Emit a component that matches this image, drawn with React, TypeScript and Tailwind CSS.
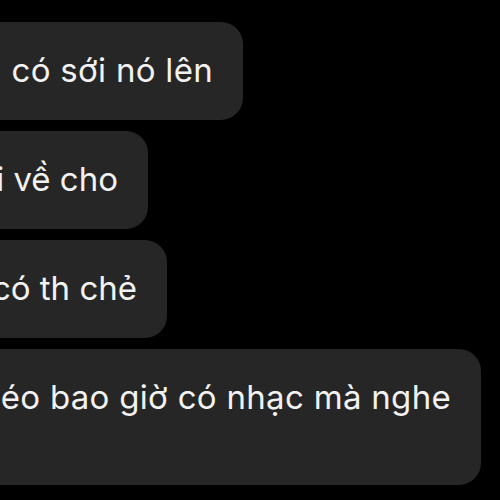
import React from "react";

const messages = [
  { text: "có sới nó lên", width: "w-[243px]", height: "h-[98px]", track: "tracking-[0.3px]" },
  { text: "i về cho", width: "w-[148px]", height: "h-[98px]", track: "tracking-normal" },
  { text: "có th chẻ", width: "w-[167px]", height: "h-[98px]", track: "tracking-normal" },
  { text: "éo bao giờ có nhạc mà nghe", width: "w-[481px]", height: "h-[136px]", track: "tracking-[0.3px]" },
];

export default function App() {
  return (
    <div
      className="w-[500px] h-[500px] bg-black overflow-hidden flex flex-col gap-[11px] pt-[22px]"
      style={{ fontFamily: "Inter, 'Noto Sans', sans-serif" }}
    >
      {messages.map((m, i) => (
        <div
          key={i}
          className={`${m.width} ${m.height} shrink-0 bg-[#262626] rounded-r-[22px] overflow-hidden flex justify-end items-start pr-[30px] pt-[28px]`}
        >
          <span className={`whitespace-nowrap text-[33px] leading-[40px] ${m.track} text-[#f2f2f2]`}>
            {m.text}
          </span>
        </div>
      ))}
    </div>
  );
}
